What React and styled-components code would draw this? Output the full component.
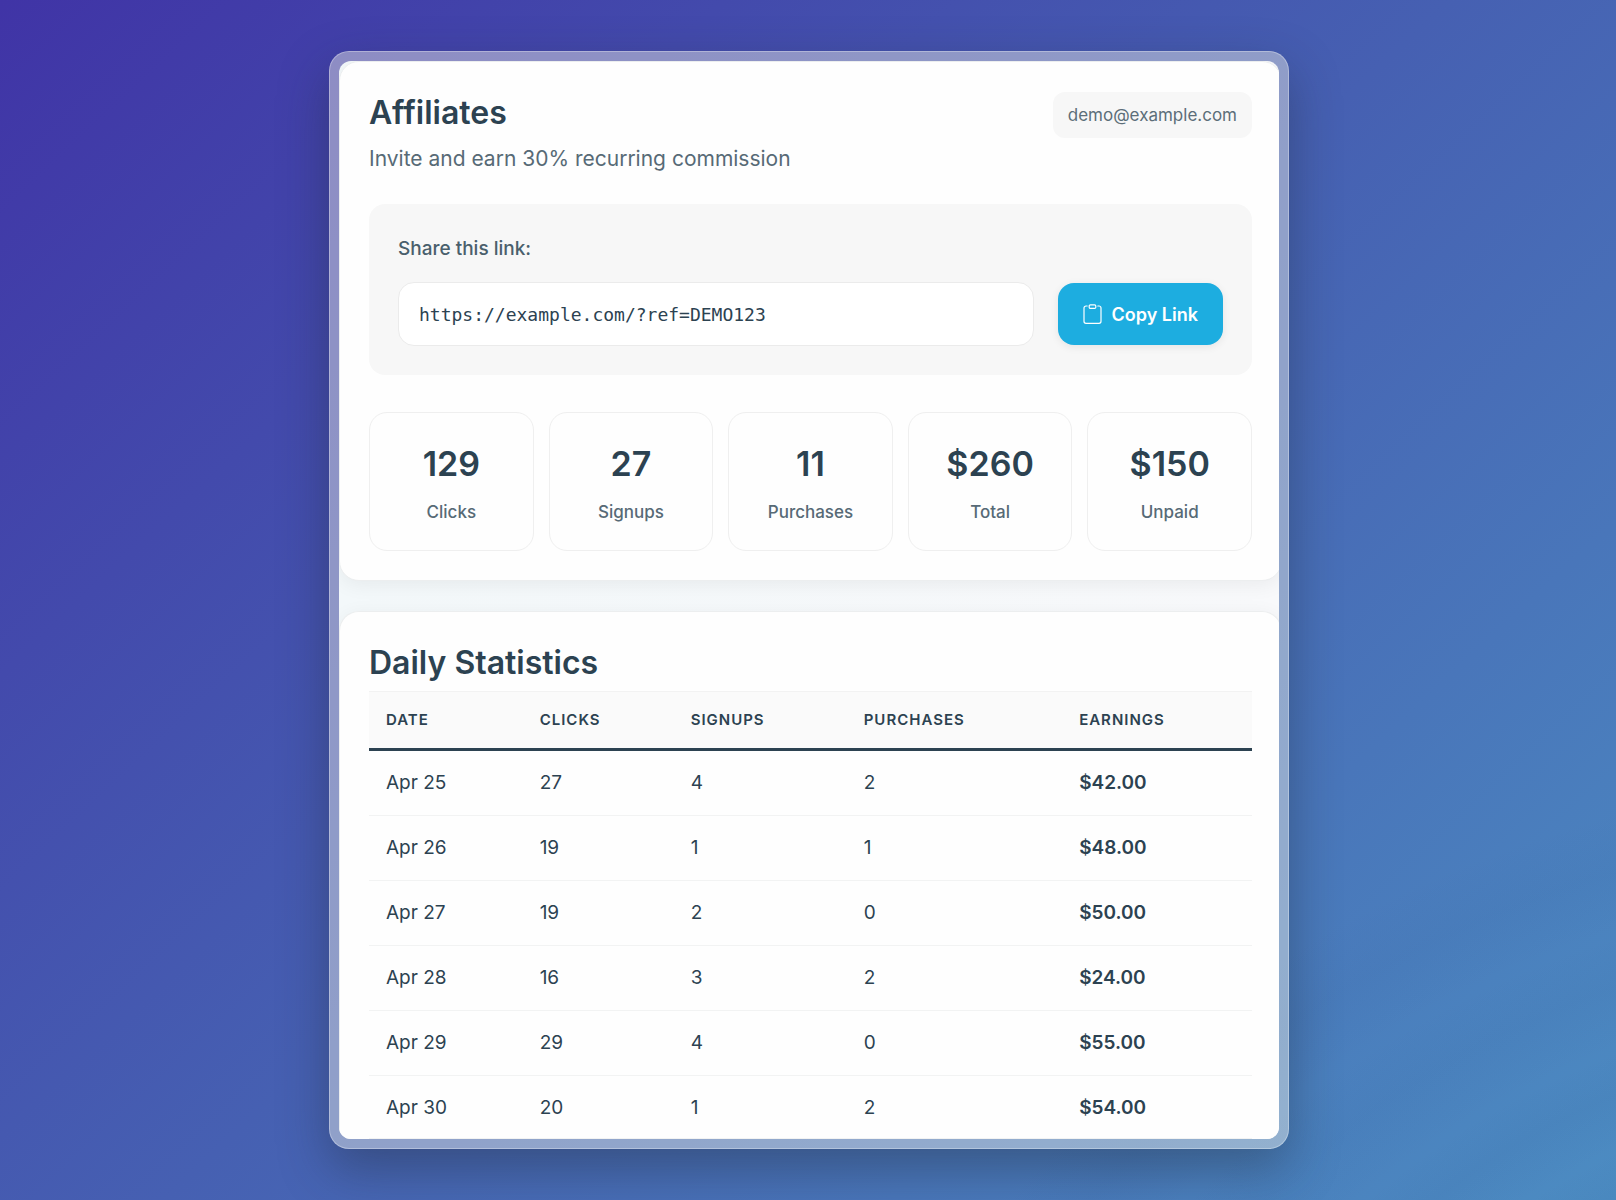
import React, { useState } from 'react';
import styled, { createGlobalStyle } from 'styled-components';

const LINK = 'https://example.com/?ref=DEMO123';

const summary = [
  { value: '129', label: 'Clicks' },
  { value: '27', label: 'Signups' },
  { value: '11', label: 'Purchases' },
  { value: '$260', label: 'Total' },
  { value: '$150', label: 'Unpaid' },
];

const days = [
  { date: 'Apr 25', clicks: 27, signups: 4, purchases: 2, earnings: '$42.00' },
  { date: 'Apr 26', clicks: 19, signups: 1, purchases: 1, earnings: '$48.00' },
  { date: 'Apr 27', clicks: 19, signups: 2, purchases: 0, earnings: '$50.00' },
  { date: 'Apr 28', clicks: 16, signups: 3, purchases: 2, earnings: '$24.00' },
  { date: 'Apr 29', clicks: 29, signups: 4, purchases: 0, earnings: '$55.00' },
  { date: 'Apr 30', clicks: 20, signups: 1, purchases: 2, earnings: '$54.00' },
];

const ClipboardIcon = () => (
  <svg width="19" height="20" viewBox="0 0 19 20" fill="none" stroke="currentColor" strokeWidth="1.2" aria-hidden="true">
    <path d="M4.2 2H3a2 2 0 0 0-2 2v13.3a2 2 0 0 0 2 2h13a2 2 0 0 0 2-2V4a2 2 0 0 0-2-2h-1.2" strokeLinecap="round" />
    <rect x="6.2" y="0.8" width="6.6" height="3.6" rx="1.2" />
  </svg>
);

const App = () => {
  const [copied, setCopied] = useState(false);

  const handleCopy = () => {
    if (navigator.clipboard) {
      navigator.clipboard.writeText(LINK).then(() => setCopied(true), () => {});
    }
  };

  return (
    <Page>
      <GlobalStyle />
      <Frame>
        <Screen>
          <Card>
            <Header>
              <div>
                <Title>Affiliates</Title>
                <Subtitle>Invite and earn 30% recurring commission</Subtitle>
              </div>
              <Email>demo@example.com</Email>
            </Header>
            <ShareBox>
              <ShareLabel htmlFor="share-link">Share this link:</ShareLabel>
              <ShareRow>
                <LinkInput id="share-link" type="text" readOnly value={LINK} />
                <CopyButton type="button" onClick={handleCopy}>
                  <ClipboardIcon />
                  {copied ? 'Copied' : 'Copy Link'}
                </CopyButton>
              </ShareRow>
            </ShareBox>
            <Stats>
              {summary.map((item) => (
                <Stat key={item.label}>
                  <StatValue>{item.value}</StatValue>
                  <StatLabel>{item.label}</StatLabel>
                </Stat>
              ))}
            </Stats>
          </Card>
          <Card $last>
            <Title as="h2">Daily Statistics</Title>
            <Table>
              <thead>
                <tr>
                  <Th $width="17.4%">Date</Th>
                  <Th $width="17.1%">Clicks</Th>
                  <Th $width="19.6%">Signups</Th>
                  <Th $width="24.4%">Purchases</Th>
                  <Th $width="21.5%">Earnings</Th>
                </tr>
              </thead>
              <tbody>
                {days.map((day) => (
                  <tr key={day.date}>
                    <Td>{day.date}</Td>
                    <Td>{day.clicks}</Td>
                    <Td>{day.signups}</Td>
                    <Td>{day.purchases}</Td>
                    <Td $strong>{day.earnings}</Td>
                  </tr>
                ))}
              </tbody>
            </Table>
          </Card>
        </Screen>
      </Frame>
    </Page>
  );
};

export default App;

const GlobalStyle = createGlobalStyle`
  *, *::before, *::after {
    box-sizing: border-box;
  }
  body {
    margin: 0;
    font-family: Inter, "Liberation Sans", sans-serif;
    color: #2c4251;
  }
  h1, h2, p {
    margin: 0;
  }
`;

const Page = styled.div`
  min-height: 100vh;
  padding: 51px 24px 51px 26px;
  background:
    radial-gradient(
      ellipse 80% 80% at 125% 135%,
      rgba(20, 50, 110, 0) 50%,
      rgba(20, 50, 110, 0.04) 54%,
      rgba(20, 50, 110, 0) 58%,
      rgba(20, 50, 110, 0.04) 63%,
      rgba(20, 50, 110, 0) 67%,
      rgba(20, 50, 110, 0.03) 73%,
      rgba(20, 50, 110, 0) 78%,
      rgba(20, 50, 110, 0.03) 84%,
      rgba(20, 50, 110, 0) 90%
    ),
    linear-gradient(137deg, #4034a6 0%, #4660b2 50%, #4c8cc2 100%);
`;

const Frame = styled.main`
  max-width: 960px;
  margin: 0 auto;
  padding: 9px;
  border: 1px solid rgba(255, 255, 255, 0.3);
  border-radius: 20px;
  background: rgba(240, 240, 230, 0.44);
  box-shadow: 0 20px 50px rgba(30, 40, 55, 0.4);
`;

const Screen = styled.div`
  border-radius: 12px;
  overflow: hidden;
  background: linear-gradient(90deg, #f3f8fa, #f8f9fb);
`;

/* cards run slightly past the right edge of the screen */
const Card = styled.section`
  margin: ${({ $last }) => ($last ? '30px -3px 0 0' : '0 -3px 0 0')};
  padding: ${({ $last }) => ($last ? '30px 29px 0' : '30px 29px 29px')};
  border: 1px solid #eceeef;
  border-bottom-width: ${({ $last }) => ($last ? '0' : '1px')};
  border-radius: ${({ $last }) => ($last ? '20px 20px 0 0' : '20px')};
  background: #fefefe;
  box-shadow: 0 4px 20px rgba(0, 0, 0, 0.06);
`;

const Header = styled.header`
  display: flex;
  justify-content: space-between;
  align-items: flex-start;
  gap: 24px;
  margin-bottom: 27px;
`;

const Title = styled.h1`
  font-size: 32px;
  font-weight: 600;
  line-height: 42px;
`;

const Subtitle = styled.p`
  margin-top: 7px;
  font-size: 21px;
  line-height: 36px;
  color: #576a76;
`;

const Email = styled.span`
  padding: 9px 15px;
  border-radius: 12px;
  background: #f7f7f7;
  font-size: 17px;
  line-height: 28px;
  color: #5c6e79;
`;

const ShareBox = styled.div`
  padding: 30px 29px 29px;
  border-radius: 16px;
  background: #f7f7f7;
`;

const ShareLabel = styled.label`
  display: block;
  margin-bottom: 18px;
  font-size: 19px;
  font-weight: 500;
  line-height: 30px;
  color: #4a5f6c;
`;

const ShareRow = styled.div`
  display: flex;
  align-items: center;
  gap: 24px;
`;

const LinkInput = styled.input`
  flex: 1;
  min-width: 0;
  height: 64px;
  padding: 0 20px;
  border: 1px solid #ebebeb;
  border-radius: 16px;
  background: #ffffff;
  font-family: "DejaVu Sans Mono", monospace;
  font-size: 18px;
  color: #2c4251;
`;

const CopyButton = styled.button`
  display: flex;
  align-items: center;
  gap: 10px;
  height: 62px;
  padding: 0 25px;
  border: none;
  border-radius: 16px;
  background: #1dade0;
  box-shadow: 0 2px 8px rgba(0, 0, 0, 0.08);
  font-family: inherit;
  font-size: 18px;
  font-weight: 600;
  color: #ffffff;
  cursor: pointer;
  &:hover {
    background: #189bc9;
  }
`;

const Stats = styled.div`
  display: grid;
  grid-template-columns: repeat(5, 1fr);
  gap: 15px;
  margin-top: 37px;
`;

const Stat = styled.div`
  padding: 28px 12px 24px;
  border: 1px solid #efefef;
  border-radius: 18px;
  text-align: center;
`;

const StatValue = styled.div`
  font-size: 34px;
  font-weight: 600;
  line-height: 46px;
`;

const StatLabel = styled.div`
  margin-top: 11px;
  font-size: 17px;
  font-weight: 500;
  line-height: 28px;
  color: #576a76;
`;

const Table = styled.table`
  width: 100%;
  margin-top: 7px;
  border-collapse: separate;
  border-spacing: 0;
  table-layout: fixed;

  tbody tr:last-child td {
    padding-bottom: 15px;
  }
`;

const Th = styled.th`
  width: ${({ $width }) => $width};
  padding: 14px 17px;
  border-top: 1px solid #f2f2f2;
  border-bottom: 3px solid #2c4251;
  background: #fafafa;
  font-size: 15px;
  font-weight: 600;
  line-height: 28px;
  letter-spacing: 1px;
  text-align: left;
  text-transform: uppercase;
`;

const Td = styled.td`
  padding: 17px;
  border-bottom: 1px solid #f2f3f3;
  font-size: 19px;
  font-weight: ${({ $strong }) => ($strong ? 600 : 400)};
  line-height: 30px;
`;
